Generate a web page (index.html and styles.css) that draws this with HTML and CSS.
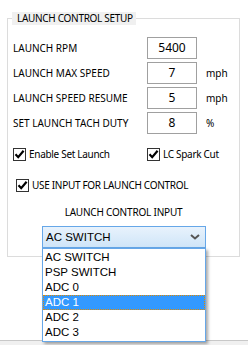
FILE: index.html
```html
<!DOCTYPE html>
<html lang="en">
  <head>
    <meta charset="UTF-8" />
    <title>Launch Control Setup</title>
    <link rel="stylesheet" href="styles.css">
  </head>
  <body>
    <div class="window">
      <fieldset class="group">
        <legend>LAUNCH CONTROL SETUP</legend>

        <!-- Numeric settings -->
        <div class="fields">
          <div class="row">
            <span class="label">LAUNCH RPM</span>
            <span class="num">5400</span>
            <span class="unit"></span>
          </div>
          <div class="row">
            <span class="label">LAUNCH MAX SPEED</span>
            <span class="num">7</span>
            <span class="unit">mph</span>
          </div>
          <div class="row">
            <span class="label">LAUNCH SPEED RESUME</span>
            <span class="num">5</span>
            <span class="unit">mph</span>
          </div>
          <div class="row">
            <span class="label">SET LAUNCH TACH DUTY</span>
            <span class="num">8</span>
            <span class="unit">%</span>
          </div>
        </div>

        <!-- Checkboxes -->
        <div class="checks">
          <label class="check">
            <span class="box"><svg viewBox="0 0 11 11" width="11" height="11"><path d="M1.5 5.3 L4.2 8.2 L9.6 1.8" /></svg></span>
            Enable Set Launch
          </label>
          <label class="check">
            <span class="box"><svg viewBox="0 0 11 11" width="11" height="11"><path d="M1.5 5.3 L4.2 8.2 L9.6 1.8" /></svg></span>
            LC Spark Cut
          </label>
        </div>
        <label class="check use-input">
          <span class="box"><svg viewBox="0 0 11 11" width="11" height="11"><path d="M1.5 5.3 L4.2 8.2 L9.6 1.8" /></svg></span>
          USE INPUT FOR LAUNCH CONTROL
        </label>

        <div class="caption">LAUNCH CONTROL INPUT</div>

        <!-- Open combo box -->
        <div class="combo">
          <div class="select">
            <span>AC SWITCH</span>
            <svg class="chevron" viewBox="0 0 10 6" width="10" height="6"><path d="M1 1 L5 4.5 L9 1" /></svg>
          </div>
          <ul class="options">
            <li>AC SWITCH</li>
            <li>PSP SWITCH</li>
            <li>ADC 0</li>
            <li class="selected">ADC 1</li>
            <li>ADC 2</li>
            <li>ADC 3</li>
          </ul>
        </div>
      </fieldset>
    </div>
    <div class="status"></div>
  </body>
</html>
```

FILE: styles.css
```css
/* Window body */
body {
  margin: 0;
  background: #fff;
  font-family: "Noto Sans", "Open Sans", sans-serif;
  font-size: 10px;
  color: #000;
}

.window {
  height: 340px;
  padding-top: 12px;
  box-sizing: border-box;
}

/* Group box */
.group {
  margin: 0 0 0 7px;
  width: 233px;
  min-width: 0;
  height: 245px;
  box-sizing: border-box;
  border: 1px solid #dcdcdc;
  padding: 12px 5px 8px 5px;
  position: relative;
}

.group legend {
  margin-left: -1px;
  padding: 0 3px 0 5px;
  line-height: 13px;
  letter-spacing: -0.3px;
  background: #f0f0f0;
}

/* Numeric rows */
.fields {
  display: flex;
  flex-direction: column;
  gap: 3px;
}

.row {
  display: flex;
  align-items: center;
  height: 22px;
}

.label {
  width: 134px;
}

.num {
  width: 50px;
  height: 22px;
  box-sizing: border-box;
  border: 1px solid #a0a0a0;
  text-align: center;
  line-height: 20px;
  font-size: 12px;
}

.unit {
  margin-left: 9px;
}

/* Checkboxes */
.checks {
  display: flex;
  margin-top: 13px;
}

.checks .check:first-child {
  width: 134px;
}

.check {
  display: flex;
  align-items: center;
  gap: 3px;
  height: 14px;
  letter-spacing: -0.3px;
}

.use-input {
  margin: 17px 0 0 3px;
}

.box {
  width: 13px;
  height: 13px;
  box-sizing: border-box;
  border: 1px solid #333;
  background: #fff;
  display: flex;
  align-items: center;
  justify-content: center;
}

.box path {
  fill: none;
  stroke: #000;
  stroke-width: 2.2;
}

.caption {
  margin-top: 13px;
  text-align: center;
  line-height: 14px;
  letter-spacing: -0.2px;
}

/* Combo box */
.combo {
  margin: 7px 0 0 29px;
  width: 164px;
  position: relative;
  font-family: "Liberation Sans", Arial, sans-serif;
  font-size: 11.5px;
}

.select {
  height: 22px;
  box-sizing: border-box;
  border: 1px solid #66a7e8;
  background: linear-gradient(#e8f2fc, #cfe5f8);
  display: flex;
  align-items: center;
  justify-content: space-between;
  padding: 0 5px 0 3px;
}

.chevron path {
  fill: none;
  stroke: #555;
  stroke-width: 2;
}

/* Dropdown list lies over the group border */
.options {
  position: absolute;
  top: 22px;
  left: 0;
  width: 164px;
  box-sizing: border-box;
  margin: 0;
  padding: 1px 0;
  list-style: none;
  background: #fff;
  border: 1px solid #66a7e8;
  box-shadow: 2px 2px 3px rgba(0, 0, 0, 0.35);
  z-index: 2;
}

.options li {
  height: 15px;
  line-height: 15px;
  padding-left: 2px;
  box-sizing: border-box;
}

.options .selected {
  background: #3399ff;
  color: #fff;
  border: 1px dotted #e08a00;
  line-height: 13px;
  padding-left: 1px;
}

/* Bottom status strip */
.status {
  height: 5px;
  border-top: 1px solid #c8c8c8;
  background: #f0f0f0;
}
```
